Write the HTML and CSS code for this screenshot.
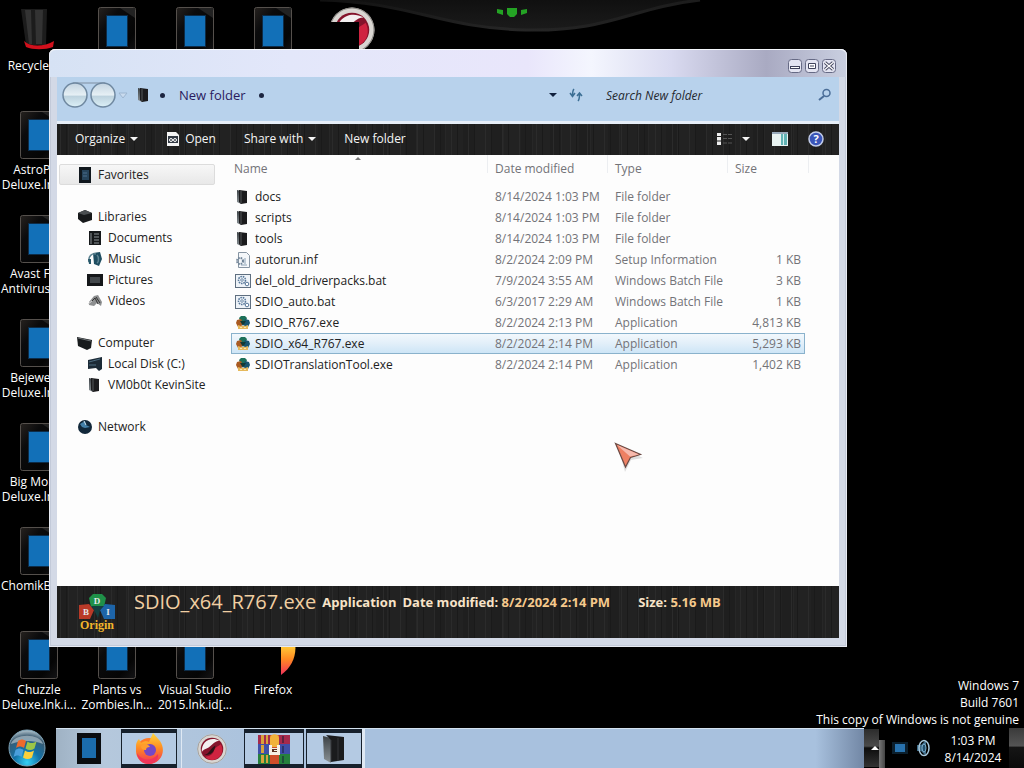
FILE: index.html
```html
<!DOCTYPE html>
<html lang="en">
<head>
  <meta charset="UTF-8" />
  <meta name="viewport" content="width=device-width, initial-scale=1" />
  <title>New folder</title>
  <link rel="stylesheet" href="styles.css">
</head>
<body>
  <!-- shared icons -->
  <svg class="defs" width="0" height="0" aria-hidden="true">
    <defs>
      <linearGradient id="bezel" x1="0" y1="0" x2="1" y2="1">
        <stop offset="0" stop-color="#26221f" />
        <stop offset=".3" stop-color="#0b0b0c" />
        <stop offset=".75" stop-color="#050505" />
        <stop offset="1" stop-color="#151517" />
      </linearGradient>
      <linearGradient id="folderSide" x1="0" y1="0" x2="0" y2="1">
        <stop offset="0" stop-color="#3c4246" />
        <stop offset="1" stop-color="#8b9296" />
      </linearGradient>
      <radialGradient id="orbFill" cx=".5" cy=".9" r=".9">
        <stop offset="0" stop-color="#35d0f5" />
        <stop offset=".4" stop-color="#1272a8" />
        <stop offset=".8" stop-color="#3b5a70" />
        <stop offset="1" stop-color="#b7c9d2" />
      </radialGradient>
      <linearGradient id="flame" x1="0" y1="0" x2="0" y2="1">
        <stop offset="0" stop-color="#ffd83c" />
        <stop offset=".5" stop-color="#ff8a22" />
        <stop offset="1" stop-color="#f0305c" />
      </linearGradient>
      <symbol id="tablet" viewBox="0 0 38 48">
        <rect x=".5" y=".5" width="37" height="47" rx="2" fill="url(#bezel)" stroke="#55504c" />
        <path d="M22 1h15v10z" fill="#222" />
        <rect x="8" y="8" width="22" height="32" fill="#0d2c48" />
        <rect x="9" y="9" width="20" height="30" fill="#1270b8" />
      </symbol>
      <symbol id="folder" viewBox="0 0 16 16">
        <path d="M2 1l4 1v13l-4-2z" fill="url(#folderSide)" />
        <path d="M4 1l8 1v12l-6 1-2-2z" fill="#1b1b1d" />
        <path d="M6 2v12" stroke="#55585b" />
      </symbol>
      <symbol id="batch" viewBox="0 0 16 16">
        <rect x=".5" y="1.500" width="15" height="13" fill="#eef3f8" stroke="#5f6f80" />
        <circle cx="7" cy="7" r="3.500" fill="none" stroke="#58789a" stroke-width="1.600" stroke-dasharray="1.600 .8" />
        <circle cx="7" cy="7" r="1.300" fill="none" stroke="#58789a" stroke-width=".8" />
        <circle cx="12" cy="11" r="1.800" fill="#fff" stroke="#58789a" />
      </symbol>
      <symbol id="app" viewBox="0 0 16 16">
        <path d="M6 1h4l2 2-2 5H6L4 3z" fill="#1d7059" />
        <path d="M2 5l4-1 2 4-2 4H3L1 8z" fill="#a85a22" />
        <path d="M14 5l-4-1-2 4 2 4h3l2-4z" fill="#17546f" />
        <path d="M5 6h6l-3 5z" fill="#123a35" />
        <path d="M3 10l3 1h4l3-1v4H3z" fill="#e6b95c" />
        <path d="M5 12h2v1H5zM9 12h2v1H9z" fill="#fbe6b0" />
      </symbol>
      <symbol id="dragon" viewBox="0 0 44 44">
        <circle cx="22" cy="22" r="21.500" fill="#d9d6d2" />
        <circle cx="22" cy="22" r="21" fill="none" stroke="#8d8a86" stroke-width="1" />
        <circle cx="22" cy="22" r="16.500" fill="#84132b" />
        <path d="M7 27C6 11 20 3 33 10c-7 0-10 6-15 9-4 3-9 3-11 8z" fill="#f3eff0" />
        <path d="M12 33c5 1 12-3 13-9 1-4 6-6 10-9 5 9 1 21-11 23-5 1-10-2-12-5z" fill="#cf2340" />
        <path d="M10 30c8 1 9-9 17-13-1 8-6 16-17 13z" fill="#2b1216" />
      </symbol>
    </defs>
  </svg>

  <main class="desktop">
    <svg class="wallpaper" viewBox="0 0 400 36" aria-hidden="true">
      <defs>
        <linearGradient id="swoosh" x1="0" y1="0" x2="0" y2="1">
          <stop offset="0" stop-color="#101010" />
          <stop offset="1" stop-color="#1b1b1b" />
        </linearGradient>
        <linearGradient id="rim" x1="0" y1="0" x2="1" y2="0">
          <stop offset="0" stop-color="#101010" />
          <stop offset=".5" stop-color="#262626" />
          <stop offset="1" stop-color="#1c1c1c" />
        </linearGradient>
      </defs>
      <path d="M10 0C100 2 130 28 215 30S320 8 390 0z" fill="url(#swoosh)" />
      <path d="M10 0C100 2 130 28 215 30S320 8 390 0" fill="none" stroke="url(#rim)" stroke-width="3" />
      <path d="M187 9l6 1v5l-6-2zM197 8h10v6l-3 3h-4l-3-3zM217 9l-6 1v5l6-2z" fill="#24a324" />
    </svg>

    <div class="icons">
      <div class="shortcut">
        <svg width="38" height="48" viewBox="0 0 38 48">
          <path d="M1 2h26l-1 36H6z" fill="#1c1c1c" />
          <path d="M5 3h6l1 34H9zM15 3h8l-1 34h-6z" fill="#333" />
          <path d="M4 34c6 6 20 6 30 0l-1 6c-8 3-20 3-27 0z" fill="#d1101c" />
        </svg>
        <span>Recycle Bin</span>
      </div>
      <div class="shortcut"><svg width="38" height="48"><use href="#tablet" /></svg><span>AstroPop Deluxe.lnk.i...</span></div>
      <div class="shortcut"><svg width="38" height="48"><use href="#tablet" /></svg><span>Avast Free Antivirus.lnk...</span></div>
      <div class="shortcut"><svg width="38" height="48"><use href="#tablet" /></svg><span>Bejeweled Deluxe.lnk.i...</span></div>
      <div class="shortcut"><svg width="38" height="48"><use href="#tablet" /></svg><span>Big Money Deluxe.lnk.i...</span></div>
      <div class="shortcut"><svg width="38" height="48"><use href="#tablet" /></svg><span>ChomikBox.lnk</span></div>
      <div class="shortcut"><svg width="38" height="48"><use href="#tablet" /></svg><span>Chuzzle Deluxe.lnk.i...</span></div>

      <div class="shortcut"><svg width="38" height="48"><use href="#tablet" /></svg></div>
      <div class="shortcut last"><svg width="38" height="48"><use href="#tablet" /></svg><span>Plants vs Zombies.ln...</span></div>

      <div class="shortcut"><svg width="38" height="48"><use href="#tablet" /></svg></div>
      <div class="shortcut last"><svg width="38" height="48"><use href="#tablet" /></svg><span>Visual Studio 2015.lnk.id[...</span></div>

      <div class="shortcut"><svg width="38" height="48"><use href="#tablet" /></svg></div>
      <div class="shortcut last">
        <svg width="46" height="48" viewBox="0 0 46 48"><path d="M31 12h14c2 12-3 24-14 32z" fill="url(#flame)" /></svg>
        <span>Firefox</span>
      </div>

      <div class="shortcut">
        <svg width="48" height="48" viewBox="0 0 48 48">
          <use href="#dragon" x="2" y="0" width="46" height="46" />
          <path d="M0 15h32v33H0z" fill="#000" />
        </svg>
      </div>
    </div>

    <p class="watermark">Windows 7<br />Build 7601<br />This copy of Windows is not genuine</p>

    <section class="window">
      <header class="titlebar">
        <button aria-label="Minimize"><svg width="14" height="14" viewBox="0 0 14 14"><rect x=".5" y=".5" width="13" height="13" rx="3" fill="#e4e5f2" stroke="#666a85" /><path d="M2 8.500h10" stroke="#40435c" stroke-width="3" /><path d="M3 8.500h8" stroke="#fff" /></svg></button>
        <button aria-label="Maximize"><svg width="14" height="14" viewBox="0 0 14 14"><rect x=".5" y=".5" width="13" height="13" rx="3" fill="#e4e5f2" stroke="#666a85" /><path d="M3.500 4.500h7v5h-7z" fill="#fff" stroke="#40435c" /><path d="M5 7h4" stroke="#40435c" /></svg></button>
        <button aria-label="Close"><svg width="14" height="14" viewBox="0 0 14 14"><rect x=".5" y=".5" width="13" height="13" rx="3" fill="#e4e5f2" stroke="#666a85" /><path d="M3 3.500l8 7M11 3.500l-8 7" stroke="#40435c" stroke-width="3" /><path d="M3 3.500l8 7M11 3.500l-8 7" stroke="#fff" stroke-width="1.300" /></svg></button>
      </header>

      <div class="addressbar">
        <svg class="nav-buttons" width="68" height="30" viewBox="0 0 68 30">
          <defs>
            <linearGradient id="glass" x1="0" y1="0" x2="0" y2="1">
              <stop offset="0" stop-color="#c3d3e0" />
              <stop offset=".5" stop-color="#e6f0f5" />
              <stop offset=".55" stop-color="#bdd2de" />
              <stop offset="1" stop-color="#dcf0f7" />
            </linearGradient>
          </defs>
          <path d="M12 3h32" stroke="#9bb0c6" stroke-width="2" />
          <circle cx="14" cy="15" r="12" fill="url(#glass)" stroke="#6f88a0" stroke-width="1.500" />
          <circle cx="42" cy="15" r="12" fill="url(#glass)" stroke="#6f88a0" stroke-width="1.500" />
          <path d="M58 13h8l-4 5z" fill="#c9dbee" stroke="#9db6d0" />
        </svg>
        <svg class="path-icon" width="16" height="16"><use href="#folder" /></svg>
        <span class="dot"></span>
        <a href="#" class="crumb">New folder</a>
        <span class="dot"></span>
        <button class="history" aria-label="Previous locations"><span class="caret"></span></button>
        <button aria-label="Refresh"><svg width="16" height="16" viewBox="0 0 16 16" fill="none" stroke="#3c6f94" stroke-width="1.500"><path d="M6 2c-1 1-1.500 2-1.500 7M2 6l2.500 3.500L7 6M10 14c1-1 1.500-2 1.500-7M9 9l2.500-3L14 9" /></svg></button>
        <input type="text" class="search" placeholder="Search New folder" aria-label="Search New folder" />
        <svg class="lens" width="14" height="14" viewBox="0 0 14 14" fill="none" stroke="#4a6d98"><circle cx="8.500" cy="5" r="3.500" stroke-width="1.500" /><path d="M6 8l-5 4" stroke-width="2" /></svg>
      </div>

      <nav class="toolbar">
        <button>Organize <span class="caret"></span></button>
        <button class="open">
          <svg width="14" height="16" viewBox="0 0 14 16"><path d="M1 1h9l3 3v11H1z" fill="#f4f4f4" /><path d="M2 5h10v7H2z" fill="#333a44" /><circle cx="5" cy="9" r="1.500" fill="none" stroke="#fff" /><circle cx="9" cy="9" r="1.500" fill="none" stroke="#fff" /></svg>
          Open
        </button>
        <button>Share with <span class="caret"></span></button>
        <button>New folder</button>
        <span class="spacer"></span>
        <button class="views" aria-label="Change your view">
          <svg width="16" height="12" viewBox="0 0 16 12"><path d="M0 0h4v12H0z" fill="#eee" /><path d="M0 3.500h4M0 8h4" stroke="#222" /><path d="M6 1.500h10M6 5.500h10M6 10h10" stroke="#555" stroke-dasharray="4 1" /></svg>
          <span class="caret"></span>
        </button>
        <button class="preview" aria-label="Show the preview pane"><svg width="16" height="14" viewBox="0 0 16 14"><path d="M0 0h16v14H0z" fill="#e9f3f2" /><path d="M0 0h16v2H0z" fill="#9ab" /><path d="M9 2h6v11H9z" fill="#62b3b5" /><path d="M11.500 2v11" stroke="#d5f0ef" /></svg></button>
        <button aria-label="Get help"><svg width="16" height="16" viewBox="0 0 16 16"><circle cx="8" cy="8" r="7" fill="#3a55b8" stroke="#c3cdea" stroke-width="1.500" /><text x="8" y="12" class="help-mark">?</text></svg></button>
      </nav>

      <div class="content">
        <aside class="tree">
          <ul>
            <li class="group active"><svg width="16" height="16" viewBox="0 0 16 16"><path d="M2 0h12v16H2z" fill="#10171d" /><path d="M5 3h7v10H5z" fill="#26435a" /><path d="M6 6h4M6 9h4" stroke="#4a6f8c" /></svg>Favorites</li>
          </ul>
          <ul>
            <li class="group"><svg width="16" height="16" viewBox="0 0 16 16"><path d="M1 4l7-3 7 3v7l-9 3-5-4z" fill="#17191b" /><path d="M1 4l7-3 7 3-8 2z" fill="#4b4f52" /></svg>Libraries</li>
            <li><svg width="16" height="16" viewBox="0 0 16 16"><path d="M2 1h12v14H2z" fill="#15181a" /><path d="M7 4h5M7 7h5M7 10h5M7 13h5M4 3v11" stroke="#8c9296" /></svg>Documents</li>
            <li><svg width="16" height="16" viewBox="0 0 16 16"><path d="M6 2l7-1 2 7-3 7-5-2z" fill="#1f4e61" /><path d="M2 11C1 5 5 2 9 3M10 4c2 2 2 7 0 8" fill="none" stroke="#5d8391" stroke-width="1.500" /><path d="M1 8h3v5H2z" fill="#27586a" /></svg>Music</li>
            <li><svg width="16" height="16" viewBox="0 0 16 16"><path d="M0 2h16v12H0z" fill="#15171a" /><path d="M3 5h10v6H3z" fill="#43484c" /></svg>Pictures</li>
            <li><svg width="16" height="16" viewBox="0 0 16 16"><path d="M2 9l5-6 4-1 4 7-1 4-4-3-3 3-5-1z" fill="#8d8f90" /><path d="M4 9l4-4 3 6M9 4l4 6" fill="none" stroke="#333" /><path d="M1 11l4-3" stroke="#ddd" /></svg>Videos</li>
          </ul>
          <ul>
            <li class="group"><svg width="16" height="16" viewBox="0 0 16 16"><path d="M0 2l15 3-1 8-4 2-9-4z" fill="#181b1d" /><path d="M1 3l13 3" stroke="#6b7073" /></svg>Computer</li>
            <li><svg width="16" height="16" viewBox="0 0 16 16"><path d="M1 4l14-3v12l-3 2-3-3-8 1z" fill="#1b2a36" /><path d="M2 6l11-3M2 9h7" stroke="#4e6c80" /></svg>Local Disk (C:)</li>
            <li><svg width="16" height="16"><use href="#folder" /></svg>VM0b0t KevinSite</li>
          </ul>
          <ul>
            <li class="group"><svg width="16" height="16" viewBox="0 0 16 16"><circle cx="8" cy="8" r="7" fill="#12283a" /><path d="M3 5l5-3 1 4 4 2-5 1-3-1z" fill="#4480a8" /><path d="M7 2l2 4" stroke="#cfe4f2" /></svg>Network</li>
          </ul>
        </aside>

        <div class="files">
          <table>
            <thead>
              <tr><th class="name">Name</th><th>Date modified</th><th>Type</th><th class="size">Size</th></tr>
            </thead>
            <tbody>
              <tr><td><svg width="16" height="16"><use href="#folder" /></svg>docs</td><td>8/14/2024 1:03 PM</td><td>File folder</td><td></td></tr>
              <tr><td><svg width="16" height="16"><use href="#folder" /></svg>scripts</td><td>8/14/2024 1:03 PM</td><td>File folder</td><td></td></tr>
              <tr><td><svg width="16" height="16"><use href="#folder" /></svg>tools</td><td>8/14/2024 1:03 PM</td><td>File folder</td><td></td></tr>
              <tr><td><svg width="16" height="16" viewBox="0 0 16 16"><path d="M3.500.5h8l3 3v12h-11z" fill="#f4f7fa" stroke="#8795a3" /><circle cx="5" cy="9" r="3" fill="none" stroke="#6e8296" stroke-width="2" stroke-dasharray="1.500 .9" /><path d="M10 6v6M6 13h6" stroke="#8ba0b4" /></svg>autorun.inf</td><td>8/2/2024 2:09 PM</td><td>Setup Information</td><td>1 KB</td></tr>
              <tr><td><svg width="16" height="16"><use href="#batch" /></svg>del_old_driverpacks.bat</td><td>7/9/2024 3:55 AM</td><td>Windows Batch File</td><td>3 KB</td></tr>
              <tr><td><svg width="16" height="16"><use href="#batch" /></svg>SDIO_auto.bat</td><td>6/3/2017 2:29 AM</td><td>Windows Batch File</td><td>1 KB</td></tr>
              <tr><td><svg width="16" height="16"><use href="#app" /></svg>SDIO_R767.exe</td><td>8/2/2024 2:13 PM</td><td>Application</td><td>4,813 KB</td></tr>
              <tr class="selected"><td><svg width="16" height="16"><use href="#app" /></svg>SDIO_x64_R767.exe</td><td>8/2/2024 2:14 PM</td><td>Application</td><td>5,293 KB</td></tr>
              <tr><td><svg width="16" height="16"><use href="#app" /></svg>SDIOTranslationTool.exe</td><td>8/2/2024 2:14 PM</td><td>Application</td><td>1,402 KB</td></tr>
            </tbody>
          </table>
        </div>
      </div>

      <footer class="details">
        <svg width="40" height="40" viewBox="0 0 40 40">
          <path d="M12 6l4-4h9l4 4-2 9H14z" fill="#1f9048" />
          <path d="M2 13l10-1 5 6-4 9H2z" fill="#b93a28" />
          <path d="M38 13l-10-1-5 6 4 9h11z" fill="#1d64a8" />
          <path d="M14 14h13l-4 4-2 8-4-8z" fill="#143f40" />
          <text x="20" y="12" class="logo-letter">D</text>
          <text x="9" y="23" class="logo-letter">B</text>
          <text x="31" y="23" class="logo-letter">I</text>
          <text x="20" y="37" class="logo-name">Origin</text>
        </svg>
        <span class="file-name">SDIO_x64_R767.exe</span>
        <strong>Application</strong>
        <strong>Date modified: <em>8/2/2024 2:14 PM</em></strong>
        <strong class="file-size">Size: <em>5.16 MB</em></strong>
      </footer>
    </section>

    <svg class="cursor" width="30" height="30" viewBox="0 0 30 30">
      <path d="M4 4l25 12-12 2-6 12z" fill="#000" opacity=".12" />
      <path d="M1.500 1.500l25 11-10 3-5 9.500z" fill="#ee8063" stroke="#6a4a44" stroke-width="1.200" />
      <path d="M3 3l22 9.500-9 2z" fill="#f6b9ad" />
    </svg>
  </main>

  <footer class="taskbar">
    <button class="start" aria-label="Start">
      <svg width="38" height="38" viewBox="0 0 38 38">
        <circle cx="19" cy="19" r="18" fill="url(#orbFill)" stroke="#7fa4b8" />
        <path d="M3 15C6 4 32 4 35 15c-9-4-22-4-32 0z" fill="#dfe9ee" opacity=".5" />
        <path d="M10 12c3-2 5-2 8 0l-2 7c-3-2-5-2-8 0z" fill="#ee6a2c" />
        <path d="M19.500 12.500c3 2 5 2 9 0l-2 7c-3 2-6 2-9 0z" fill="#9bc648" />
        <path d="M7.500 21c3-2 5-2 8 0l-2 7c-3-2-5-2-8 0z" fill="#4a9fdc" />
        <path d="M17 21.500c3 2 5 2 9 0l-2 7c-3 2-6 2-9 0z" fill="#fbd03c" />
      </svg>
    </button>
    <div class="tasks">
      <button aria-label="Tablet"><svg width="24" height="31" viewBox="0 0 24 31"><path d="M0 0h24v31H0z" fill="#0a0c0f" /><path d="M5 5h14v20H5z" fill="#1b6cac" /></svg></button>
      <button class="running" aria-label="Firefox">
        <svg width="32" height="32" viewBox="0 0 32 32">
          <circle cx="16" cy="18" r="13" fill="#ff7a2a" />
          <path d="M3 13c0-3 1-5 3-7l2 4c3-2 6-2 8-1l4-9 7 8c6 9 2 19-6 22-9 3-18-4-18-17z" fill="url(#flame)" />
          <path d="M4 20c4 8 15 9 21 1 1 6-4 10-10 10S4 26 4 20z" fill="#f0355a" />
          <circle cx="17" cy="17" r="6" fill="#7548c6" />
          <path d="M8 13c3-2 7-2 9 1-3 0-4 1-4 3-3 0-5-1-5-4z" fill="#ff9d2e" />
        </svg>
      </button>
      <button aria-label="Dragon"><svg width="30" height="30"><use href="#dragon" /></svg></button>
      <button class="running" aria-label="WinRAR">
        <svg width="32" height="30" viewBox="0 0 32 30">
          <path d="M0 1h32v9H0z" fill="#a52a4c" /><path d="M0 10h32v10H0z" fill="#3f4fa8" /><path d="M0 20h32v10H0z" fill="#26803c" />
          <path d="M3 1h3v9H3zM8 1h2v9H8zM3 11h3v8H3zM3 21h3v8H3zM8 21h2v8H8z" fill="#d8a33b" />
          <path d="M24 2h2v7h-2zM24 12h2v7h-2zM24 22h2v7h-2z" fill="#151b33" opacity=".5" />
          <path d="M12 1h9v29h-9z" fill="#cf4f2b" /><path d="M12 4c0-5 9-5 9 0v9h-9z" fill="#f1b33a" />
          <path d="M11 11h3v3h5v-3h3v10H11z" fill="#f5f0e4" /><path d="M14 15h5v1h-3v1h3v1h-5z" fill="#5a3020" />
        </svg>
      </button>
      <button class="running current" aria-label="New folder">
        <svg width="22" height="28" viewBox="0 0 22 28"><path d="M0 1l8 2v25l-7-4z" fill="url(#folderSide)" /><path d="M3 0l18 2v23l-13 2V5z" fill="#1a1b1d" /><path d="M8 5v22M15 3v23" stroke="#34373a" /></svg>
      </button>
    </div>
    <div class="tray">
      <button class="tray-more" aria-label="Show hidden icons"></button>
      <span class="grip"></span>
      <svg width="16" height="14" viewBox="0 0 16 14"><path d="M0 1h16v12H0z" fill="#0b1f2d" /><path d="M3 3h10v8H3z" fill="#2872ae" /></svg>
      <svg width="16" height="18" viewBox="0 0 16 18"><path d="M2 6h4l5-5v16l-5-5H2z" fill="#3d6b88" /><ellipse cx="9" cy="9" rx="5" ry="7.500" fill="none" stroke="#a8c8dc" stroke-width="1.500" /><ellipse cx="9" cy="9" rx="2" ry="4" fill="#22506e" stroke="#7fb0cc" /></svg>
      <time class="clock">1:03 PM<br />8/14/2024</time>
      <button class="show-desktop" aria-label="Show desktop"></button>
    </div>
  </footer>
</body>
</html>
```
FILE: styles.css
```css
:root {
  --frame: #d3d9e6;
  --glass: #b8d2ec;
  --grain: repeating-linear-gradient(90deg, transparent 0 3px, #2b2b2b 3px 4px, transparent 4px 9px, #1a1a1a 9px 10px, transparent 10px 17px),
    repeating-linear-gradient(90deg, #1f1f1f 0 11px, #272727 11px 12px, #222 12px 29px);
  --task: #a8c1de;
  --muted: #737378;
}
* {
  box-sizing: border-box;
}
body {
  margin: 0;
  height: 100vh;
  display: flex;
  flex-direction: column;
  overflow: hidden;
  background: #000;
  color: #222;
  font-family: "Open Sans", "Noto Sans", sans-serif;
  font-size: 12px;
  line-height: 15px;
}
button {
  display: flex;
  align-items: center;
  padding: 0;
  border: none;
  background: none;
  color: inherit;
  font: inherit;
}
svg {
  display: block;
  flex: none;
}
.defs {
  position: absolute;
}
.caret {
  border: 4px solid transparent;
  border-top-color: currentColor;
  border-bottom: none;
}

/* desktop */
.desktop {
  position: relative;
  flex: 1;
  min-height: 0;
}
.wallpaper {
  position: absolute;
  top: 0;
  left: 310px;
  width: 400px;
}
.icons {
  display: grid;
  grid-template-rows: repeat(7, 104px);
  grid-auto-columns: 78px;
  grid-auto-flow: column;
  justify-content: start;
}
.shortcut {
  position: relative;
  display: flex;
  flex-direction: column;
  align-items: center;
  padding-top: 7px;
  color: #fff;
  text-align: center;
  text-shadow: 0 1px 2px #000;
}
.shortcut span {
  width: 76px;
  margin-top: 3px;
}
.shortcut.last {
  grid-row: 7;
}
.watermark {
  position: absolute;
  right: 5px;
  bottom: 0;
  margin: 0;
  color: #fff;
  line-height: 17px;
  text-align: right;
}
.cursor {
  position: absolute;
  left: 614px;
  top: 442px;
}

/* explorer window */
.window {
  position: absolute;
  top: 49px;
  right: 177px;
  bottom: 81px;
  left: 49px;
  display: flex;
  flex-direction: column;
  padding: 0 8px 9px;
  border-radius: 6px 6px 0 0;
  background: var(--frame);
  box-shadow: inset 0 0 0 1px #e8ebf3, inset 0 0 0 2px #c3cad9;
}
.titlebar {
  height: 28px;
  display: flex;
  justify-content: flex-end;
  gap: 3px;
  margin: 0 -7px;
  padding: 9px 10px 0;
  border-top: 1px solid #f5f8fd;
  border-radius: 6px 6px 0 0;
  background: linear-gradient(90deg, #d6e2f4, #e3e7fa 30%, #e9e6fb 60%, #f4f6fe 68%, #d9daf0 78%, #a9aac2 90%, #c9cfe0);
}
.titlebar button {
  height: 14px;
}
.addressbar {
  height: 44px;
  display: flex;
  align-items: center;
  padding: 0 7px 8px 4px;
  background: var(--glass);
}
.path-icon {
  margin: 0 8px 0 7px;
}
.dot {
  width: 5px;
  height: 5px;
  border-radius: 50%;
  background: #1c2540;
}
.crumb {
  margin: 0 13px 0 14px;
  color: #2a1a5e;
  font-size: 13px;
  text-decoration: none;
}
.history {
  margin: 0 11px 0 auto;
  color: #10203c;
}
.search {
  width: 221px;
  margin-left: 20px;
  padding: 2px;
  border: none;
  outline: none;
  background: transparent;
  color: #222;
  font: italic 12px/15px "Open Sans", "Noto Sans", sans-serif;
}
.search::placeholder {
  color: #26292f;
}
.lens {
  margin-left: -7px;
}
.toolbar {
  height: 34px;
  display: flex;
  align-items: center;
  flex: none;
  padding: 0 15px 2px 18px;
  border-top: 3px solid #e6eef8;
  background: var(--grain);
  background-clip: padding-box;
  color: #f5f5f5;
}
.toolbar button {
  gap: 5px;
  margin-right: 28px;
}
.toolbar .spacer {
  flex: 1;
}
.toolbar .views {
  gap: 9px;
  margin-right: 22px;
}
.toolbar .preview {
  margin-right: 20px;
}
.toolbar button:last-child {
  margin-right: 0;
}
.help-mark {
  fill: #fff;
  font-size: 11px;
  font-weight: bold;
  text-anchor: middle;
}
.content {
  flex: 1;
  min-height: 0;
  display: flex;
  background: #fdfdfd;
}

/* folder tree */
.tree {
  width: 170px;
  padding: 9px 12px 0 2px;
}
.tree ul {
  margin: 0 0 21px;
  padding: 0;
  list-style: none;
}
.tree li {
  height: 21px;
  display: flex;
  align-items: center;
  gap: 5px;
  padding-left: 27px;
  border: 1px solid transparent;
  border-radius: 2px;
  white-space: nowrap;
}
.tree .group {
  padding-left: 17px;
}
.tree .active {
  border-color: #dcdcdc;
  background: linear-gradient(#f7f7f7, #e8e8e8);
}

/* file list */
.files {
  flex: 1;
  padding-left: 4px;
}
table {
  position: relative;
  width: 574px;
  border-collapse: collapse;
  table-layout: fixed;
}
/* sort arrow */
table::before {
  content: "";
  position: absolute;
  top: 2px;
  left: 124px;
  border: 3px solid transparent;
  border-top: none;
  border-bottom-color: #777;
}
th {
  position: relative;
  height: 31px;
  width: 120px;
  padding: 0 0 5px 7px;
  color: var(--muted);
  font-weight: normal;
  text-align: left;
}
th.name {
  width: 257px;
  padding-left: 3px;
}
th.size {
  width: auto;
}
th::after {
  content: "";
  position: absolute;
  top: 0;
  right: 0;
  height: 18px;
  border-right: 1px solid #eceef1;
}
th.size::after {
  right: -4px;
}
td {
  height: 21px;
  padding: 0 0 0 7px;
  color: var(--muted);
  white-space: nowrap;
}
td:first-child {
  padding-left: 4px;
  color: #222;
}
td:last-child {
  padding-right: 4px;
  text-align: right;
}
td svg {
  display: inline-block;
  margin-right: 4px;
  vertical-align: text-bottom;
}
.selected {
  outline: 1px solid #8ab2cc;
  outline-offset: -1px;
  background: linear-gradient(#f4f9fd, #e2eff9 50%, #cbe4f6);
}

/* details pane */
.details {
  height: 52px;
  flex: none;
  display: flex;
  padding: 6px 20px;
  background: var(--grain);
  color: #f7e3c8;
  font-size: 13px;
  line-height: 20px;
  white-space: nowrap;
}
.details strong {
  margin-right: 6px;
}
.details em {
  color: #f5c98c;
  font-style: normal;
}
.details .file-size {
  margin-left: 22px;
}
.file-name {
  margin: 0 6px 0 17px;
  color: #f1cfa2;
  font-size: 20px;
}
.logo-letter,
.logo-name {
  fill: #e4e8ea;
  font: bold 9px "Liberation Serif", serif;
  text-anchor: middle;
}
.logo-name {
  fill: #f2b62c;
  font-size: 12px;
}

/* taskbar */
.taskbar {
  height: 40px;
  flex: none;
  display: flex;
}
.start {
  width: 56px;
  padding-left: 8px;
}
.tasks {
  flex: 1;
  display: flex;
  gap: 2px;
  border-top: 1px solid #d4e2f0;
  background: linear-gradient(90deg, #9fb2c4, #b5c8dc 6%, var(--task) 30%, var(--task) 94%, #7287a5);
}
.tasks button {
  width: 61px;
  justify-content: center;
}
.tasks button:first-child {
  width: 63px;
  padding-left: 3px;
}
.tasks .running {
  width: 56px;
  border: 1px solid #16202c;
  border-width: 4px 1px;
  background: #b4cae3;
}
.tasks .running + button {
  margin-left: 2px;
  border-left: 1px solid #dfe9f4;
}
.tasks .running:nth-child(4) {
  width: 60px;
}
.tasks .running + .current {
  margin-left: 0;
  border-left: 1px solid #16202c;
  box-shadow: 3px 0 #dfe9f4;
}
.tray {
  width: 160px;
  display: flex;
  align-items: center;
  color: #fff;
}
.tray > svg {
  margin-left: 7px;
}
.tray-more {
  width: 15px;
  height: 38px;
  justify-content: flex-end;
  background: linear-gradient(#2c2c2c, #4a4a4a 45%, #0c0c0c 50%, #333);
}
.tray-more::before {
  content: "";
  border: 4px solid transparent;
  border-top: none;
  border-bottom-color: #fff;
}
.grip {
  align-self: flex-end;
  width: 6px;
  height: 28px;
  background: linear-gradient(90deg, #777, #444);
}
.clock {
  flex: 1;
  padding: 2px 0 0 6px;
  line-height: 17px;
  text-align: center;
}
.show-desktop {
  width: 15px;
  height: 40px;
  background: linear-gradient(#3a3a3a, #555 45%, #151515 48%, #0a0a0a);
}
```
